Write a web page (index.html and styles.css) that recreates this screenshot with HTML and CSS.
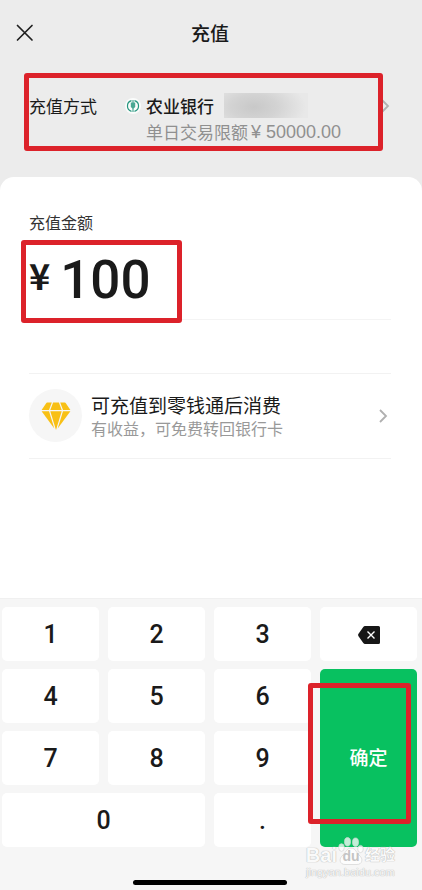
FILE: index.html
```html
<!DOCTYPE html>
<html lang="zh-CN">
<head>
<meta charset="utf-8">
<meta name="viewport" content="width=device-width, initial-scale=1">
<title>充值</title>
<link rel="stylesheet" href="styles.css">
</head>
<body>
<div class="app">
  <header class="topbar">
    <button class="close" type="button" aria-label="关闭">
      <svg width="18" height="18" viewBox="0 0 18 18"><path d="M1.500 1.500 16 16M16 1.500 1.500 16" fill="none" stroke="#202020" stroke-width="1.700" stroke-linecap="round"/></svg>
    </button>
    <h1 class="title">充值</h1>
  </header>

  <section class="method">
    <span class="method-label">充值方式</span>
    <a class="bank" href="#bank">
      <svg class="bank-logo" width="16" height="16" viewBox="0 0 16 16"><circle cx="8" cy="8" r="8" fill="#fafcfb"/><path d="M6.500 2.700A5.500 5.500 0 0 0 6.500 13.300M9.500 2.700A5.500 5.500 0 0 1 9.500 13.300" fill="none" stroke="#27967f" stroke-width="1.200"/><path d="M8 2v12" fill="none" stroke="#27967f" stroke-width="1"/><path d="M5.800 4.500H10.200V9L8.600 10.500H7.400L5.800 9Z" fill="#4aa793"/></svg>
      <span class="bank-text">
        <span class="bank-name">农业银行<span class="masked"></span></span>
        <span class="limit">单日交易限额<span class="limit-value">¥ 50000.00</span></span>
      </span>
      <svg class="chevron" width="9" height="16" viewBox="0 0 9 16"><path d="m1 2 6 6-6 6" fill="none" stroke="#b0b0b0" stroke-width="1.800"/></svg>
    </a>
    <span class="mark mark-method"></span>
  </section>

  <main class="sheet">
    <label class="amount-label" for="amount">充值金额</label>
    <div class="amount">
      <span class="currency">¥</span>
      <input class="amount-input" id="amount" type="text" inputmode="decimal" value="100">
      <span class="mark mark-amount"></span>
    </div>
    <a class="promo" href="#promo">
      <span class="promo-icon">
        <svg width="30" height="28" viewBox="0 0 30 28"><g fill="#f8c015"><path d="M6.300.500h4.500L8 8H.600L5 1.400Q5.500.500 6.300.500Z"/><path d="M12.100.500h5.800L20.700 8H9.300Z"/><path d="M19.200.500h4.500q.800 0 1.300.900L29.400 8H22Z"/><path d="M.600 9.200H8l5.300 17.200Z"/><path d="M9.300 9.200h11.400L15 28Z"/><path d="M22 9.200h7.400L16.700 26.400Z"/></g></svg>
      </span>
      <span class="promo-text">
        <span class="promo-title">可充值到零钱通后消费</span>
        <span class="promo-note">有收益，可免费转回银行卡</span>
      </span>
      <svg class="chevron" width="9" height="16" viewBox="0 0 9 16"><path d="m1 2 6 6-6 6" fill="none" stroke="#b0b0b0" stroke-width="1.800"/></svg>
    </a>
  </main>

  <section class="keyboard">
    <div class="keys">
      <button class="key" type="button">1</button>
      <button class="key" type="button">2</button>
      <button class="key" type="button">3</button>
      <button class="key" type="button" aria-label="删除">
        <svg width="22" height="18" viewBox="0 0 22 18"><path d="M7 0h13.500Q22 0 22 1.500v15Q22 18 20.500 18H7Q6 18 5.300 17L.500 10.200Q-.300 9 .500 7.800L5.300 1Q6 0 7 0Z" fill="#171717"/><path d="m9.500 5.500 7 7m0-7-7 7" stroke="#fff" stroke-width="1.400" fill="none"/></svg>
      </button>
      <button class="key" type="button">4</button>
      <button class="key" type="button">5</button>
      <button class="key" type="button">6</button>
      <button class="key key-confirm" type="button">确定<span class="mark mark-confirm"></span></button>
      <button class="key" type="button">7</button>
      <button class="key" type="button">8</button>
      <button class="key" type="button">9</button>
      <button class="key key-zero" type="button">0</button>
      <button class="key" type="button">.</button>
    </div>
    <div class="watermark">
      <span class="watermark-brand">Bai<svg class="paw" width="28" height="28" viewBox="0 0 28 28"><g fill="#fff" fill-opacity=".75" stroke="#d4d4d4" stroke-width=".7"><ellipse cx="10.500" cy="4.800" rx="3" ry="4.200"/><ellipse cx="18.500" cy="5.200" rx="3" ry="4.200"/><ellipse cx="4.500" cy="10.500" rx="2.800" ry="3.800"/><ellipse cx="23.500" cy="12" rx="2.800" ry="3.600"/><path d="M14 11c4 0 5 4 8 7 5 4 3 9.500-2 9.500H8c-5 0-7-5.500-2-9.500 3-3 4-7 8-7Z"/></g><text x="14" y="24" text-anchor="middle" class="paw-text">du</text></svg><span class="watermark-cn">经验</span></span>
      <span class="watermark-url">jingyan.baidu.com</span>
    </div>
    <div class="home-bar"></div>
  </section>
</div>
</body>
</html>
```
FILE: styles.css
```css
* {
  box-sizing: border-box;
}

body {
  margin: 0;
  background: #ececec;
  color: #1a1a1a;
  font-family: "Noto Sans CJK SC", "Noto Sans", sans-serif;
}

button {
  border: 0;
  padding: 0;
  font: inherit;
  color: inherit;
  background: none;
}

a {
  color: inherit;
  text-decoration: none;
}

svg {
  display: block;
  flex: none;
}

.app {
  display: flex;
  flex-direction: column;
  min-height: 100vh;
}

.topbar {
  display: grid;
  grid-template-columns: 18px 1fr 18px;
  align-items: center;
  padding: 17px 18px 16px 16px;
}

.title {
  margin: 0;
  font-size: 19px;
  line-height: 32px;
  font-weight: 500;
  text-align: center;
}

.method {
  position: relative;
  display: flex;
  padding: 28px 32px 32px 29px;
}

.method-label {
  flex: none;
  width: 96px;
  font-size: 17px;
  line-height: 26px;
}

.bank {
  flex: 1;
  display: flex;
  align-items: flex-start;
  gap: 5px;
}

.bank-logo,
.bank .chevron {
  margin-top: 5px;
}

.bank-text {
  flex: 1;
  font-size: 17px;
  line-height: 26px;
}

.bank-name,
.limit {
  display: flex;
}

.bank-name {
  gap: 10px;
  font-weight: 500;
}

.masked {
  width: 84px;
  height: 25px;
  background: radial-gradient(ellipse 52px 28px at 30px 14px, #c8c8c8 0, #d3d3d3 45%, #e8e8e8 100%);
}

.limit {
  gap: 3px;
  color: #909090;
}

.limit-value {
  font-family: "Liberation Sans", Arial, sans-serif;
  font-size: 18px;
}

.mark {
  position: absolute;
  border: 5px solid #dc222a;
  border-radius: 3px;
  pointer-events: none;
}

.mark-method {
  inset: 8px 39px 26px 24px;
}

.sheet {
  flex: 1;
  padding: 33px 31px 0 29px;
  border-radius: 14px 14px 0 0;
  background: #fff;
}

.amount-label {
  display: block;
  font-size: 16px;
  line-height: 24px;
  color: #333;
}

.amount {
  position: relative;
  display: flex;
  align-items: flex-start;
  gap: 10px;
  height: 86px;
  border-bottom: 1px solid #f4f4f4;
}

.currency {
  font-size: 36px;
  line-height: 80px;
  font-weight: 700;
}

.amount-input {
  flex: 1;
  min-width: 0;
  height: 86px;
  border: 0;
  padding: 6px 0 0;
  outline: 0;
  background: none;
  color: inherit;
  font: 500 53px/80px Roboto, "Noto Sans", sans-serif;
}

.mark-amount {
  top: 6px;
  left: -8px;
  width: 161px;
  height: 83px;
}

.promo {
  display: flex;
  align-items: center;
  gap: 9px;
  margin-top: 53px;
  padding: 15px 3px 16px 0;
  border: solid #f2f2f2;
  border-width: 1px 0;
}

.promo-icon {
  display: grid;
  place-items: center;
  width: 53px;
  height: 53px;
  border-radius: 50%;
  background: #f6f6f6;
}

.promo-text {
  flex: 1;
  display: flex;
  flex-direction: column;
}

.promo-title {
  font-size: 19px;
  line-height: 24px;
}

.promo-note {
  font-size: 16px;
  line-height: 22px;
  color: #999;
}

.keyboard {
  position: relative;
  padding: 8px 5px 5px 2px;
  border-top: 1px solid #f0f0f0;
  background: #f6f6f6;
}

.keys {
  display: grid;
  grid-template-columns: repeat(4, 1fr);
  grid-auto-rows: 54px;
  gap: 8px 9px;
}

.key {
  display: grid;
  place-items: center;
  padding-top: 2px;
  border-radius: 5px;
  background: #fff;
  font-family: Roboto, "Noto Sans CJK SC", sans-serif;
  font-size: 25px;
  line-height: 36px;
  font-weight: 500;
}

.key-confirm {
  position: relative;
  grid-row: span 3;
  background: #08c160;
  color: #fff;
  font-size: 19px;
}

.key-zero {
  grid-column: span 2;
}

.mark-confirm {
  inset: 14px 6px 23px -12px;
}

.home-bar {
  width: 154px;
  height: 5px;
  margin: 33px auto 0;
  border-radius: 3px;
  background: #000;
}

.watermark {
  position: absolute;
  right: 27px;
  bottom: 11px;
  display: flex;
  flex-direction: column;
  align-items: center;
  color: #fafafa;
  font-family: "Liberation Sans", "Noto Sans CJK SC", sans-serif;
  text-shadow: 0 0 1px #aaa, 0 0 1px #ccc;
}

.watermark-brand {
  display: flex;
  align-items: flex-end;
  font-size: 20px;
  line-height: 20px;
  font-weight: 700;
}

.watermark-cn {
  font-size: 15px;
}

.watermark-url {
  font-size: 11px;
  line-height: 14px;
}

.paw-text {
  fill: #c4c4c4;
  font-size: 14px;
  text-shadow: none;
}
```
